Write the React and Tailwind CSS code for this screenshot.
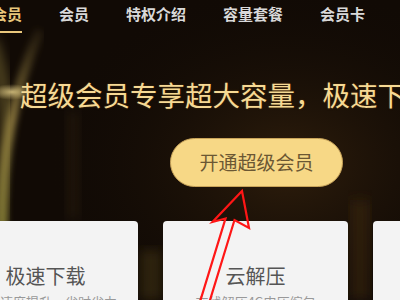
import React from "react";

const font = { fontFamily: '"Noto Sans CJK SC", "Noto Sans", sans-serif' };

function Backdrop() {
  return (
    <svg className="absolute inset-0 pointer-events-none" width="400" height="300" viewBox="0 0 400 300">
      <defs>
        <radialGradient id="g1" cx="0.72" cy="0.55" r="0.6">
          <stop offset="0" stopColor="#2f1e0c" />
          <stop offset="1" stopColor="#120b05" stopOpacity="0" />
        </radialGradient>
        <linearGradient id="arc" x1="0" y1="0" x2="0" y2="1">
          <stop offset="0" stopColor="#a08a45" stopOpacity="0.1" />
          <stop offset="0.45" stopColor="#b89f52" stopOpacity="0.7" />
          <stop offset="1" stopColor="#8a8a35" stopOpacity="0.8" />
        </linearGradient>
        <radialGradient id="flare" cx="0.5" cy="0.5" r="0.5">
          <stop offset="0" stopColor="#e8d28a" stopOpacity="0.8" />
          <stop offset="1" stopColor="#e8d28a" stopOpacity="0" />
        </radialGradient>
        <filter id="blur"><feGaussianBlur stdDeviation="3" /></filter>
        <filter id="blur2"><feGaussianBlur stdDeviation="6" /></filter>
      </defs>
      <rect width="400" height="300" fill="#110a05" />
      <rect width="400" height="300" fill="url(#g1)" />
      <path d="M40 30 Q 0 120 2 230" stroke="url(#arc)" strokeWidth="10" fill="none" filter="url(#blur)" />
      <path d="M-10 40 Q 20 120 -2 230" stroke="#8a7a3a" strokeWidth="14" fill="none" opacity="0.5" filter="url(#blur2)" />
      <ellipse cx="12" cy="92" rx="22" ry="8" fill="url(#flare)" />
      <rect x="66" y="110" width="14" height="110" fill="#3a2a12" opacity="0.3" filter="url(#blur2)" />
      <rect x="350" y="200" width="20" height="100" fill="#3a2810" opacity="0.6" filter="url(#blur2)" />
      <rect x="140" y="250" width="22" height="50" fill="#4a3a18" opacity="0.5" filter="url(#blur2)" />
    </svg>
  );
}

function Arrow() {
  return (
    <svg className="absolute inset-0 pointer-events-none" width="400" height="300" viewBox="0 0 400 300">
      <path
        d="M242 191 L212.5 222 L225.5 218.5 L199 305 L208.5 305 L234.5 220 L249 228 Z"
        fill="none"
        stroke="#ff1616"
        strokeWidth="2.2"
        strokeLinejoin="miter"
      />
    </svg>
  );
}

function Card({ title, desc }) {
  return (
    <div className="w-[185px] h-[120px] shrink-0 rounded-[4px] bg-[#f3f3f3] pt-[41px] flex flex-col items-center">
      <div className="text-[20px] leading-[28px] text-[#555555] whitespace-nowrap">{title}</div>
      <div className="mt-[3px] text-[13px] leading-[18px] text-[#999999] whitespace-nowrap">{desc}</div>
    </div>
  );
}

export default function App() {
  return (
    <div className="relative w-[400px] h-[300px] overflow-hidden bg-[#110a05]" style={font}>
      <Backdrop />
      <div className="relative">
        <nav className="h-[34px] flex gap-[37px] ml-[-38px] pt-[4px] text-[15px] leading-[20px] font-bold whitespace-nowrap">
          <div className="flex flex-col items-stretch text-[#e9c77c]">
            <span>超级会员</span>
            <span className="mt-[7px] h-[2px] bg-[#e9c77c]" />
          </div>
          <span className="text-[#d9d9d9]">会员</span>
          <span className="text-[#d9d9d9]">特权介绍</span>
          <span className="text-[#d9d9d9]">容量套餐</span>
          <span className="text-[#d9d9d9]">会员卡</span>
        </nav>
        <h1 className="mt-[42px] ml-[20px] text-[27.5px] leading-[36px] text-[#f6d994] whitespace-nowrap [text-shadow:0_0_2px_rgba(120,80,20,0.6)]">
          超级会员专享超大容量，极速下载
        </h1>
        <button className="mt-[26px] ml-[170px] w-[173px] h-[49px] rounded-full bg-[#f7d886] border border-[#c9a45a] text-[19px] text-[#6b5733] flex items-center justify-center">
          开通超级会员
        </button>
        <div className="mt-[34px] ml-[-47px] flex gap-[25px]">
          <Card title="极速下载" desc="下载速度提升，省时省力" />
          <Card title="云解压" desc="在线解压4G内压缩包" />
          <Card title="视频倍速" desc="多种倍速播放选择" />
        </div>
      </div>
      <Arrow />
    </div>
  );
}
